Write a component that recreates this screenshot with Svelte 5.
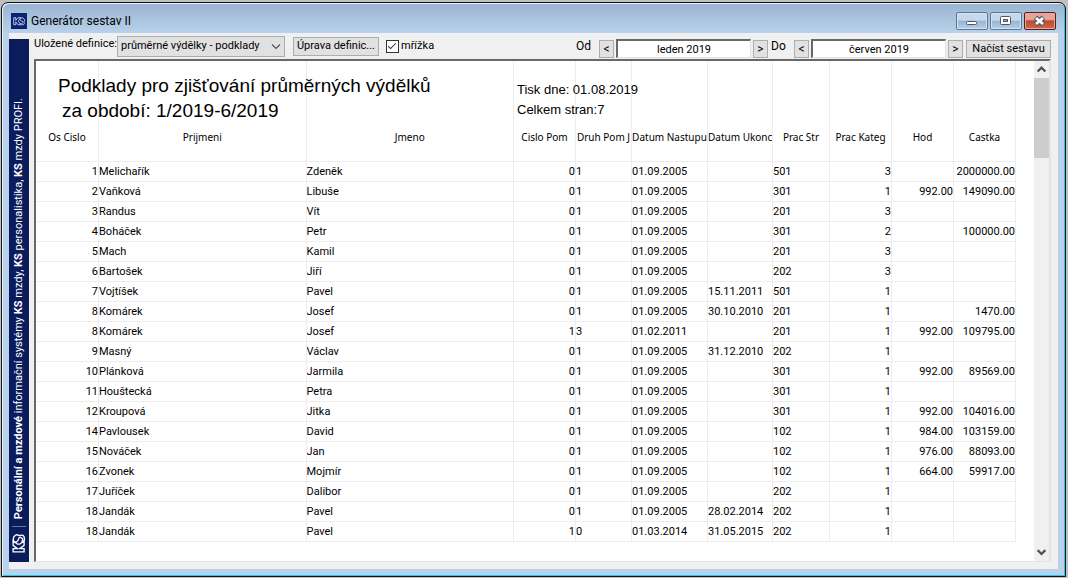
<script lang="ts">
	interface Row {
		id: number;
		surname: string;
		name: string;
		pom: number;
		kind: string;
		from: string;
		to: string;
		center: string;
		category: number;
		hours: string;
		amount: string;
	}

	const headings = [
		'Os Cislo', 'Prijmeni', 'Jmeno', 'Cislo Pom', 'Druh Pom J', 'Datum Nastupu',
		'Datum Ukonc', 'Prac Str', 'Prac Kateg', 'Hod', 'Castka'
	];

	const source = `1|Melichařík|Zdeněk|0|1|01.09.2005||501|3||2000000.00
2|Vaňková|Libuše|0|1|01.09.2005||301|1|992.00|149090.00
3|Randus|Vít|0|1|01.09.2005||201|3||
4|Boháček|Petr|0|1|01.09.2005||301|2||100000.00
5|Mach|Kamil|0|1|01.09.2005||201|3||
6|Bartošek|Jiří|0|1|01.09.2005||202|3||
7|Vojtíšek|Pavel|0|1|01.09.2005|15.11.2011|501|1||
8|Komárek|Josef|0|1|01.09.2005|30.10.2010|201|1||1470.00
8|Komárek|Josef|1|3|01.02.2011||201|1|992.00|109795.00
9|Masný|Václav|0|1|01.09.2005|31.12.2010|202|1||
10|Plánková|Jarmila|0|1|01.09.2005||301|1|992.00|89569.00
11|Houštecká|Petra|0|1|01.09.2005||301|1||
12|Kroupová|Jitka|0|1|01.09.2005||301|1|992.00|104016.00
14|Pavlousek|David|0|1|01.09.2005||102|1|984.00|103159.00
15|Nováček|Jan|0|1|01.09.2005||102|1|976.00|88093.00
16|Zvonek|Mojmír|0|1|01.09.2005||102|1|664.00|59917.00
17|Juříček|Dalibor|0|1|01.09.2005||202|1||
18|Jandák|Pavel|0|1|01.09.2005|28.02.2014|202|1||
18|Jandák|Pavel|1|0|01.03.2014|31.05.2015|202|1||`;

	const rows: Row[] = source.split('\n').map((line) => {
		const [id, surname, name, pom, kind, from, to, center, category, hours, amount] = line.split('|');
		return { id: +id, surname, name, pom: +pom, kind, from, to, center, category: +category, hours, amount };
	});

	const months = [
		'leden', 'únor', 'březen', 'duben', 'květen', 'červen',
		'červenec', 'srpen', 'září', 'říjen', 'listopad', 'prosinec'
	];

	let fromMonth = $state(2019 * 12);
	let toMonth = $state(2019 * 12 + 5);
	let grid = $state(true);

	const label = (m: number) => `${months[m % 12]} ${Math.floor(m / 12)}`;
</script>

{#snippet logo()}
	<path d="M1 1h3v4l3-4h4L8 5v2l3 4H7L4 7v4H1z" />
	<path d="M16 3C14 0 9 1 10 4s5 1 4 4-3 1-4 1M16 3c2 2-1 3 0 5s-1 4-5 3" />
{/snippet}

<div class="desktop">
	<div class="window">
		<header class="caption">
			<svg class="app-icon" viewBox="0 0 16 16">
				<rect width="16" height="16" fill="#0b2270" />
				<g transform="translate(2 4) scale(.7)" fill="none" stroke="#c9d3ef" stroke-width="1.3">{@render logo()}</g>
			</svg>
			<h1>Generátor sestav II</h1>
			<div class="caption-buttons">
				<button aria-label="Minimalizovat">
					<svg viewBox="0 0 30 16"><rect x="9.5" y="8.5" width="10" height="3" rx="1" fill="#fff" stroke="#535666" /></svg>
				</button>
				<button aria-label="Maximalizovat">
					<svg viewBox="0 0 30 16">
						<rect x="9.5" y="3.5" width="10" height="8" rx="1" fill="#fff" stroke="#535666" />
						<rect x="12.5" y="6.5" width="4" height="2" fill="#8fb0d5" stroke="#535666" />
					</svg>
				</button>
				<button class="close" aria-label="Zavřít">
					<svg viewBox="0 0 30 16">
						<path d="M10.5 4.5l8 7M18.5 4.5l-8 7" stroke="#535666" stroke-width="5" />
						<path d="M11 5l7 6M18 5l-7 6" stroke="#fff" stroke-width="2.8" />
					</svg>
				</button>
			</div>
		</header>

		<div class="client">
			<aside class="banner">
				<p><b>Personální a mzdové</b> informační systémy <b>KS</b> mzdy, <b>KS</b> personalistika, <b>KS</b> mzdy PROFI.</p>
				<span class="rule"></span>
				<svg class="banner-logo" viewBox="0 0 14 20">
					<g transform="translate(0 19) rotate(-90) scale(1.1)" fill="none" stroke="#fff" stroke-width="1.2">{@render logo()}</g>
				</svg>
			</aside>

			<main>
				<div class="toolbar">
					<label class="definition-label" for="definition">Uložené definice:</label>
					<div class="select">
						<select id="definition">
							<option>průměrné výdělky - podklady</option>
						</select>
						<svg viewBox="0 0 10 6"><path d="M1 .5l4 4 4-4" fill="none" stroke="#555" stroke-width="1.2" /></svg>
					</div>
					<button class="edit">Úprava definic...</button>
					<label class="check">
						<input type="checkbox" bind:checked={grid} />
						<span>mřížka</span>
					</label>

					<div class="period">
						<label for="from">Od</label>
						<button class="step" aria-label="Předchozí měsíc od" onclick={() => fromMonth--}>&lt;</button>
						<input id="from" type="text" readonly value={label(fromMonth)} />
						<button class="step" aria-label="Další měsíc od" onclick={() => fromMonth++}>&gt;</button>
						<label for="to">Do</label>
						<button class="step" aria-label="Předchozí měsíc do" onclick={() => toMonth--}>&lt;</button>
						<input id="to" type="text" readonly value={label(toMonth)} />
						<button class="step" aria-label="Další měsíc do" onclick={() => toMonth++}>&gt;</button>
						<button class="load">Načíst sestavu</button>
					</div>
				</div>

				<div class="report">
					<div class="sheet">
						<div class="titles">
							<h2>
								<span>Podklady pro zjišťování průměrných výdělků</span>
								<span class="range">za období: 1/2019-6/2019</span>
							</h2>
							<p>
								<span>Tisk dne: 01.08.2019</span>
								<span>Celkem stran:7</span>
							</p>
						</div>
						<table class:grid>
							<colgroup>
								<col class="w-id" />
								<col />
								<col />
								<col class="w-num" />
								<col class="w-kind" />
								<col class="w-from" />
								<col class="w-to" />
								<col class="w-center" />
								<col class="w-num" />
								<col class="w-num" />
								<col class="w-num" />
							</colgroup>
							<thead>
								<tr>
									{#each headings as heading (heading)}
										<th scope="col">{heading}</th>
									{/each}
								</tr>
							</thead>
							<tbody>
								{#each rows as row, i (i)}
									<tr>
										<td class="num">{row.id}</td>
										<td>{row.surname}</td>
										<td>{row.name}</td>
										<td class="num">{row.pom}</td>
										<td>{row.kind}</td>
										<td>{row.from}</td>
										<td>{row.to}</td>
										<td>{row.center}</td>
										<td class="num">{row.category}</td>
										<td class="num">{row.hours}</td>
										<td class="num">{row.amount}</td>
									</tr>
								{/each}
							</tbody>
						</table>
					</div>
					<div class="scrollbar">
						<button aria-label="Nahoru"><svg viewBox="0 0 10 6"><path d="M1.5 5L5 1.5 8.5 5" /></svg></button>
						<div class="track"><div class="thumb"></div></div>
						<button aria-label="Dolů"><svg viewBox="0 0 10 6"><path d="M1.5 1L5 4.5 8.5 1" /></svg></button>
					</div>
				</div>
			</main>
		</div>
	</div>
</div>

<style>
	:global(body) {
		margin: 0;
	}

	.desktop {
		box-sizing: border-box;
		display: flex;
		min-height: 100vh;
		padding: 2px 2px 1px 1px;
		background: #c0c0c0;
		color: #000;
		font: 11px/16px Roboto, 'Liberation Sans', sans-serif;
	}

	button,
	input,
	select {
		box-sizing: border-box;
		margin: 0;
		padding: 0;
		border-radius: 0;
		font: inherit;
		color: inherit;
	}

	svg {
		display: block;
	}

	.window {
		flex: 1;
		min-width: 0;
		display: flex;
		flex-direction: column;
		box-sizing: border-box;
		padding: 0 7px 7px;
		border: 1px solid #111;
		border-radius: 7px 7px 0 0;
		background: linear-gradient(#99b4d1, #b9d1ea 30px);
		box-shadow:
			inset 1px 1px 0 #e8f3fc,
			inset -1px -1px 0 #23c9e8;
	}

	.caption {
		display: flex;
		align-items: center;
		height: 30px;
		padding: 6px 2px 0 2px;
		box-sizing: border-box;
	}

	.app-icon {
		width: 16px;
		height: 16px;
	}

	h1 {
		flex: 1;
		margin: 0 0 0 4px;
		font-size: 12px;
		font-weight: 400;
		line-height: 18px;
	}

	.caption-buttons {
		display: flex;
		gap: 2px;
		padding-bottom: 1px;
	}

	.caption-buttons button {
		width: 32px;
		height: 18px;
		border: 1px solid #5e7893;
		border-radius: 2px;
		background: linear-gradient(#c5d8ec 45%, #98b4d2 50%, #b5cfea);
		box-shadow: inset 0 0 0 1px #d3e3f3;
	}

	.caption-buttons .close {
		border-color: #5a1f22;
		background: linear-gradient(#e6a596 40%, #bd4a30 50%, #d0694a);
		box-shadow: inset 0 0 0 1px #e3aa9b;
	}

	.client {
		flex: 1;
		display: flex;
		padding: 0 7px 7px 0;
		background: #f0f0f0;
	}

	.banner {
		display: flex;
		flex-direction: column;
		align-items: center;
		justify-content: flex-end;
		gap: 7px;
		width: 20px;
		margin-top: 6px;
		padding-bottom: 8px;
		box-sizing: border-box;
		background: #0a1c5c;
		color: #fff;
	}

	.banner p {
		margin: 0;
		writing-mode: vertical-rl;
		transform: rotate(180deg);
		white-space: nowrap;
		line-height: 20px;
	}

	.rule {
		width: 14px;
		height: 1px;
		background: #6a76a4;
	}

	.banner-logo {
		width: 14px;
		height: 20px;
	}

	main {
		flex: 1;
		min-width: 0;
		display: flex;
		flex-direction: column;
		margin-left: 5px;
	}

	.toolbar {
		display: flex;
		align-items: center;
		height: 26px;
	}

	.definition-label {
		width: 83px;
		padding-bottom: 4px;
		white-space: nowrap;
	}

	.select {
		position: relative;
		width: 168px;
	}

	.select select {
		display: block;
		width: 100%;
		height: 21px;
		padding: 0 18px 0 3px;
		border: 1px solid #adadad;
		background: #e1e1e1;
		appearance: none;
	}

	.select svg {
		position: absolute;
		top: 8px;
		right: 4px;
		width: 10px;
		height: 6px;
		pointer-events: none;
	}

	.toolbar button {
		height: 19px;
		border: 1px solid #adadad;
		background: #e1e1e1;
		white-space: nowrap;
	}

	.edit {
		width: 86px;
		margin: 0 7px 0 8px;
	}

	.check {
		display: flex;
		align-items: center;
		gap: 2px;
	}

	.check input {
		width: 13px;
		height: 13px;
		border: 1px solid #333;
		background: #fff;
		appearance: none;
	}

	.check input:checked::before {
		content: '';
		display: block;
		width: 8px;
		height: 4px;
		margin: 2px 0 0 1px;
		border: solid #333;
		border-width: 0 0 1px 1px;
		box-sizing: border-box;
		transform: rotate(-45deg);
	}

	.period {
		display: flex;
		align-items: center;
		gap: 2px;
		margin-left: auto;
		padding-top: 5px;
	}

	.period label {
		width: 22px;
		padding: 0 0 5px 1px;
		box-sizing: border-box;
		font-size: 12px;
	}

	.period input {
		width: 135px;
		height: 19px;
		border: solid;
		border-width: 2px 1px 1px 2px;
		border-color: #696969 #e3e3e3 #e3e3e3 #696969;
		background: #fff;
		text-align: center;
	}

	.toolbar .step {
		width: 15px;
		height: 18px;
		font-size: 12px;
	}

	.toolbar .load {
		width: 85px;
		height: 18px;
		margin-left: 1px;
	}

	.report {
		flex: 1;
		display: flex;
		border: solid;
		border-width: 2px 2px 1px 2px;
		border-color: #696969 #e3e3e3 #e3e3e3 #696969;
		background: #fff;
	}

	.sheet {
		position: relative;
		flex: 1;
		min-width: 0;
		padding: 0 18px 18px 0;
	}

	/* report titles are printed across the column lines */
	.titles {
		position: absolute;
		inset: 12px 0 auto 22px;
		display: flex;
		white-space: nowrap;
		font-family: 'Liberation Sans', Arial, sans-serif;
	}

	.titles span {
		display: block;
	}

	.titles h2 {
		width: 459px;
		margin: 0;
		font-size: 19px;
		font-weight: 400;
		line-height: 25px;
	}

	.titles .range {
		padding-left: 4px;
	}

	.titles p {
		margin: 7px 0 0;
		font-size: 13px;
		line-height: 20px;
	}

	table {
		width: 100%;
		table-layout: fixed;
		border-collapse: separate;
		border-spacing: 0;
		line-height: 19px;
	}

	.w-id { width: 63px; }
	.w-num { width: 62px; }
	.w-kind { width: 56px; }
	.w-from { width: 76px; }
	.w-to { width: 65px; }
	.w-center { width: 57px; }

	th,
	td {
		padding: 0;
		border: solid transparent;
		border-width: 0 1px 1px 0;
		overflow: hidden;
		white-space: nowrap;
		font-weight: 400;
		text-align: left;
	}

	.grid th,
	.grid td {
		border-color: #ededed;
	}

	th {
		height: 33px;
		padding: 67px 0 0;
		vertical-align: top;
		text-align: center;
		font-family: 'Noto Sans', 'Open Sans', sans-serif;
		font-size: 10px;
	}

	.num {
		text-align: right;
	}

	.scrollbar {
		display: flex;
		flex-direction: column;
		width: 15px;
		background: #f0f0f0;
	}

	.scrollbar button {
		height: 17px;
		padding: 0 2px;
		border: 0;
		background: none;
	}

	.scrollbar path {
		fill: none;
		stroke: #505050;
		stroke-width: 2;
	}

	.track {
		flex: 1;
	}

	.thumb {
		height: 80px;
		background: #cdcdcd;
	}
</style>
